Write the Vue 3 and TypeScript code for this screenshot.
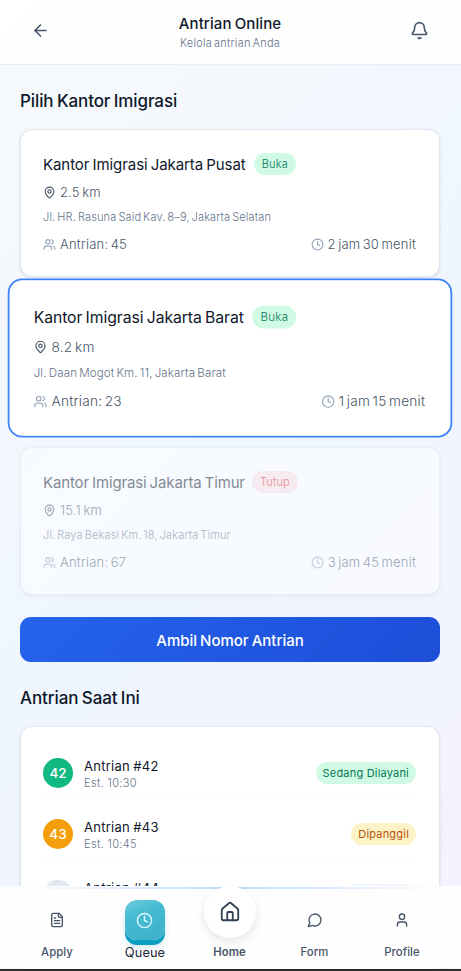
<script setup lang="ts">
interface Office {
  name: string
  open: boolean
  distance: string
  address: string
  queue: number
  wait: string
  selected?: boolean
}
interface Ticket {
  number: number
  estimate: string
  status: string
  tone: 'green' | 'amber' | 'grey'
}

const offices: Office[] = [
  { name: 'Kantor Imigrasi Jakarta Pusat', open: true, distance: '2.5 km', address: 'Jl. HR. Rasuna Said Kav. 8–9, Jakarta Selatan', queue: 45, wait: '2 jam 30 menit' },
  { name: 'Kantor Imigrasi Jakarta Barat', open: true, distance: '8.2 km', address: 'Jl. Daan Mogot Km. 11, Jakarta Barat', queue: 23, wait: '1 jam 15 menit', selected: true },
  { name: 'Kantor Imigrasi Jakarta Timur', open: false, distance: '15.1 km', address: 'Jl. Raya Bekasi Km. 18, Jakarta Timur', queue: 67, wait: '3 jam 45 menit' },
]
const tickets: Ticket[] = [
  { number: 42, estimate: '10:30', status: 'Sedang Dilayani', tone: 'green' },
  { number: 43, estimate: '10:45', status: 'Dipanggil', tone: 'amber' },
  { number: 44, estimate: '', status: '', tone: 'grey' },
]
</script>

<template>
  <div class="screen">
    <header class="topbar">
      <button class="icon-btn" aria-label="Kembali">
        <svg class="ico back" viewBox="0 0 24 24"><path d="m12 19-7-7 7-7" /><path d="M19 12H5" /></svg>
      </button>
      <div class="heading">
        <h1>Antrian Online</h1>
        <p>Kelola antrian Anda</p>
      </div>
      <button class="icon-btn" aria-label="Notifikasi">
        <svg class="ico bell" viewBox="0 0 24 24"><path d="M10.27 21a2 2 0 0 0 3.46 0" /><path d="M3.26 15.33A1 1 0 0 0 4 17h16a1 1 0 0 0 .74-1.67C19.41 13.96 18 12.5 18 8A6 6 0 0 0 6 8c0 4.5-1.41 5.96-2.74 7.33" /></svg>
      </button>
    </header>

    <main>
      <h2>Pilih Kantor Imigrasi</h2>
      <section class="offices">
        <article v-for="o in offices" :key="o.name" class="card office" :class="{ selected: o.selected, closed: !o.open }">
          <div class="title-row">
            <h3>{{ o.name }}</h3>
            <span class="pill" :class="o.open ? 'green' : 'red'">{{ o.open ? 'Buka' : 'Tutup' }}</span>
          </div>
          <div class="distance">
            <svg class="ico pin" viewBox="0 0 24 24"><path d="M20 10c0 4.99-5.54 10.19-7.4 11.8a1 1 0 0 1-1.2 0C9.54 20.19 4 14.99 4 10a8 8 0 0 1 16 0" /><circle cx="12" cy="10" r="3" /></svg>
            <span>{{ o.distance }}</span>
          </div>
          <p class="address">{{ o.address }}</p>
          <div class="stats">
            <span class="stat">
              <svg class="ico muted" viewBox="0 0 24 24"><path d="M16 21v-2a4 4 0 0 0-4-4H6a4 4 0 0 0-4 4v2" /><circle cx="9" cy="7" r="4" /><path d="M22 21v-2a4 4 0 0 0-3-3.87" /><path d="M16 3.13a4 4 0 0 1 0 7.75" /></svg>
              <span>Antrian: {{ o.queue }}</span>
            </span>
            <span class="stat wait">
              <svg class="ico muted" viewBox="0 0 24 24"><circle cx="12" cy="12" r="10" /><path d="M12 6v6l4 2" /></svg>
              <span>{{ o.wait }}</span>
            </span>
          </div>
        </article>
      </section>

      <button class="primary">Ambil Nomor Antrian</button>

      <h2>Antrian Saat Ini</h2>
      <section class="card tickets">
        <div v-for="t in tickets" :key="t.number" class="ticket">
          <span class="number" :class="t.tone"><template v-if="t.estimate">{{ t.number }}</template></span>
          <div class="info">
            <strong>Antrian #{{ t.number }}</strong>
            <small v-if="t.estimate">Est. {{ t.estimate }}</small>
          </div>
          <span class="pill status" :class="t.tone">{{ t.status }}</span>
        </div>
      </section>
    </main>

    <nav class="tabbar">
      <a class="tab">
        <span class="glyph"><svg class="ico" viewBox="0 0 24 24"><path d="M15 2H6a2 2 0 0 0-2 2v16a2 2 0 0 0 2 2h12a2 2 0 0 0 2-2V7Z" /><path d="M14 2v4a2 2 0 0 0 2 2h4" /><path d="M10 9H8" /><path d="M16 13H8" /><path d="M16 17H8" /></svg></span>
        <span class="label">Apply</span>
      </a>
      <a class="tab active">
        <span class="glyph tile"><svg class="ico" viewBox="0 0 24 24"><circle cx="12" cy="12" r="10" /><path d="M12 6v6l4 2" /></svg></span>
        <span class="label">Queue</span>
      </a>
      <a class="tab home">
        <span class="glyph bubble"><svg class="ico" viewBox="0 0 24 24"><path d="M15 21v-8a1 1 0 0 0-1-1h-4a1 1 0 0 0-1 1v8" /><path d="M3 10a2 2 0 0 1 .71-1.53l7-6a2 2 0 0 1 2.58 0l7 6A2 2 0 0 1 21 10v9a2 2 0 0 1-2 2H5a2 2 0 0 1-2-2z" /></svg></span>
        <span class="label">Home</span>
      </a>
      <a class="tab">
        <span class="glyph"><svg class="ico" viewBox="0 0 24 24"><path d="M7.9 20A9 9 0 1 0 4 16.1L2 22Z" /></svg></span>
        <span class="label">Form</span>
      </a>
      <a class="tab">
        <span class="glyph"><svg class="ico" viewBox="0 0 24 24"><path d="M19 21v-2a4 4 0 0 0-4-4H9a4 4 0 0 0-4 4v2" /><circle cx="12" cy="7" r="4" /></svg></span>
        <span class="label">Profile</span>
      </a>
    </nav>
    <div class="edge"></div>
  </div>
</template>

<style>
body { margin: 0; overflow: hidden; }
</style>

<style scoped>
* { box-sizing: border-box; }
h1, h2, h3, p { margin: 0; }
button { border: 0; background: none; padding: 0; font: inherit; color: inherit; }
.screen {
  position: relative;
  height: 971px;
  overflow: hidden;
  background: linear-gradient(135deg, #f8fafc 0%, #eff6ff 50%, #f5f3ff 100%);
  font-family: Inter, "Open Sans", sans-serif;
  color: #0f172a;
}
.ico {
  display: block;
  flex: none;
  width: 13px;
  height: 13px;
  fill: none;
  stroke: currentColor;
  stroke-width: 2;
  stroke-linecap: round;
  stroke-linejoin: round;
}
.topbar {
  display: flex;
  align-items: center;
  justify-content: space-between;
  height: 65px;
  padding: 0 22px 4px 21px;
  background: rgba(255, 255, 255, 0.85);
  border-bottom: 1px solid #e9eef5;
}
.icon-btn { display: grid; place-items: center; width: 38px; height: 38px; color: #475569; }
.back, .bell { width: 19px; height: 19px; }
.heading { padding-top: 6px; text-align: center; }
h1 { font-size: 15px; line-height: 20px; font-weight: 500; letter-spacing: 0.1px; word-spacing: -1px; }
.heading p { font-size: 11px; line-height: 18px; font-weight: 300; color: #64748b; letter-spacing: 0.25px; word-spacing: -1.5px; }
main { padding: 23px 21px 0 20px; }
h2 { font-size: 17px; line-height: 26px; font-weight: 500; letter-spacing: -0.1px; word-spacing: -1px; }
.offices { display: flex; flex-direction: column; gap: 11px; margin-top: 15px; }
.card {
  background: #fff;
  border: 1px solid #e2e8f0;
  border-radius: 12px;
  box-shadow: 0 1px 3px rgba(15, 23, 42, 0.12);
}
.office { height: 148px; padding: 22px 23px 22px 22px; }
.selected {
  transform: translateY(-4px) scale(1.05);
  border-color: #fff;
  box-shadow: 0 0 0 1.7px #3b82f6;
}
.closed { opacity: 0.5; }
.title-row { display: flex; align-items: center; gap: 8px; height: 24px; }
h3 { font-size: 15px; font-weight: 400; letter-spacing: -0.07px; word-spacing: -1px; white-space: nowrap; }
.closed h3 { letter-spacing: -0.14px; }
.closed .title-row { gap: 7px; }
.pill {
  display: inline-flex;
  align-items: center;
  height: 22px;
  padding: 0 8px;
  border-radius: 11px;
  font-size: 11px;
  font-weight: 350;
  letter-spacing: 0.2px;
  white-space: nowrap;
}
.pill.green { background: #d1fae5; color: #047857; }
.pill.red { background: #fee2e2; color: #dc2626; }
.pill.amber { background: #fef3c7; color: #b45309; }
.pill.grey { background: #f1f5f9; color: #475569; }
.pill.status { padding: 0 7px; letter-spacing: 0.2px; font-weight: 400; }
.pill.status.grey { width: 70px; }
.distance { display: flex; align-items: center; gap: 4px; height: 20px; margin-top: 6px; font-size: 13px; font-weight: 300; color: #475569; word-spacing: -1px; letter-spacing: 0.12px; }
.address { height: 18px; margin-top: 6px; font-size: 11px; line-height: 18px; font-weight: 300; color: #64748b; word-spacing: -1.3px; letter-spacing: 0.15px; }
.stats { display: flex; justify-content: space-between; height: 20px; margin-top: 8px; font-size: 13px; font-weight: 300; color: #475569; word-spacing: -1.5px; letter-spacing: 0.22px; }
.stat { display: flex; align-items: center; gap: 4px; }
.muted { color: #94a3b8; }
.primary {
  display: block;
  width: 100%;
  height: 45px;
  margin: 22px 0 23px;
  padding-top: 1px;
  border-radius: 11px;
  background: linear-gradient(135deg, #2563eb, #1d4ed8);
  color: #fff;
  font-size: 15px;
  font-weight: 500;
  word-spacing: -1px;
}
.tickets { margin-top: 15px; padding: 11px 23px 10px 22px; height: 300px; }
.ticket { display: flex; align-items: center; height: 61px; padding-top: 10px; border-bottom: 1px solid #f8fafc; }
.number { display: grid; place-items: center; width: 30px; height: 30px; border-radius: 50%; color: #fff; font-size: 13.5px; font-weight: 550; }
.number.green { background: #10b981; }
.number.amber { background: #f59e0b; }
.number.grey { background: #e2e8f0; color: #64748b; }
.info { flex: 1; height: 36px; padding-top: 2px; margin-left: 11px; }
.info strong { display: block; font-size: 13px; line-height: 18px; font-weight: 400; letter-spacing: 0.25px; word-spacing: -0.5px; }
.info small { display: block; font-size: 11px; line-height: 17px; font-weight: 300; color: #64748b; letter-spacing: 0.35px; }
.tabbar {
  position: absolute;
  left: 0;
  right: 0;
  top: 886px;
  height: 82px;
  display: grid;
  grid-template-columns: 88px 87px 83px 87px 88px;
  padding-left: 13px;
  background: #fefefe;
  color: #475569;
}
.tabbar::before {
  content: "";
  position: absolute;
  left: 0;
  right: 0;
  top: 1px;
  height: 2px;
  background: linear-gradient(90deg, transparent 4%, #bfdbfe 50%, transparent 96%);
}
.tab { position: relative; display: flex; flex-direction: column; align-items: center; padding-top: 14px; }
.glyph { display: grid; place-items: center; width: 40px; height: 40px; }
.glyph .ico { width: 16px; height: 16px; }
.label { margin-top: 4px; font-size: 11.3px; line-height: 16px; font-weight: 500; letter-spacing: 0.1px; }
.tile {
  border-radius: 12px;
  background: linear-gradient(160deg, #6fcddd 0%, #45bbd1 35%, #3fb0ca 100%);
  box-shadow: 0 5px 0 #0a9fc0, 0 7px 6px rgba(8, 145, 178, 0.2);
  color: #e0f7fb;
}
.tile .ico { width: 17px; height: 17px; }
.active .label { margin-top: 5px; padding-left: 1px; font-size: 12.8px; font-weight: 400; color: #1e293b; }
.home { padding-top: 0; }
.bubble { width: 52px; height: 52px; border-radius: 50%; background: #fff; box-shadow: 0 4px 10px rgba(15, 23, 42, 0.1); color: #334155; }
.bubble .ico { width: 22px; height: 22px; }
.home .label { margin-top: 6px; font-weight: 600; }
.edge { position: absolute; left: 0; right: 0; bottom: 0; height: 2px; background: #2b2b2b; }
</style>
